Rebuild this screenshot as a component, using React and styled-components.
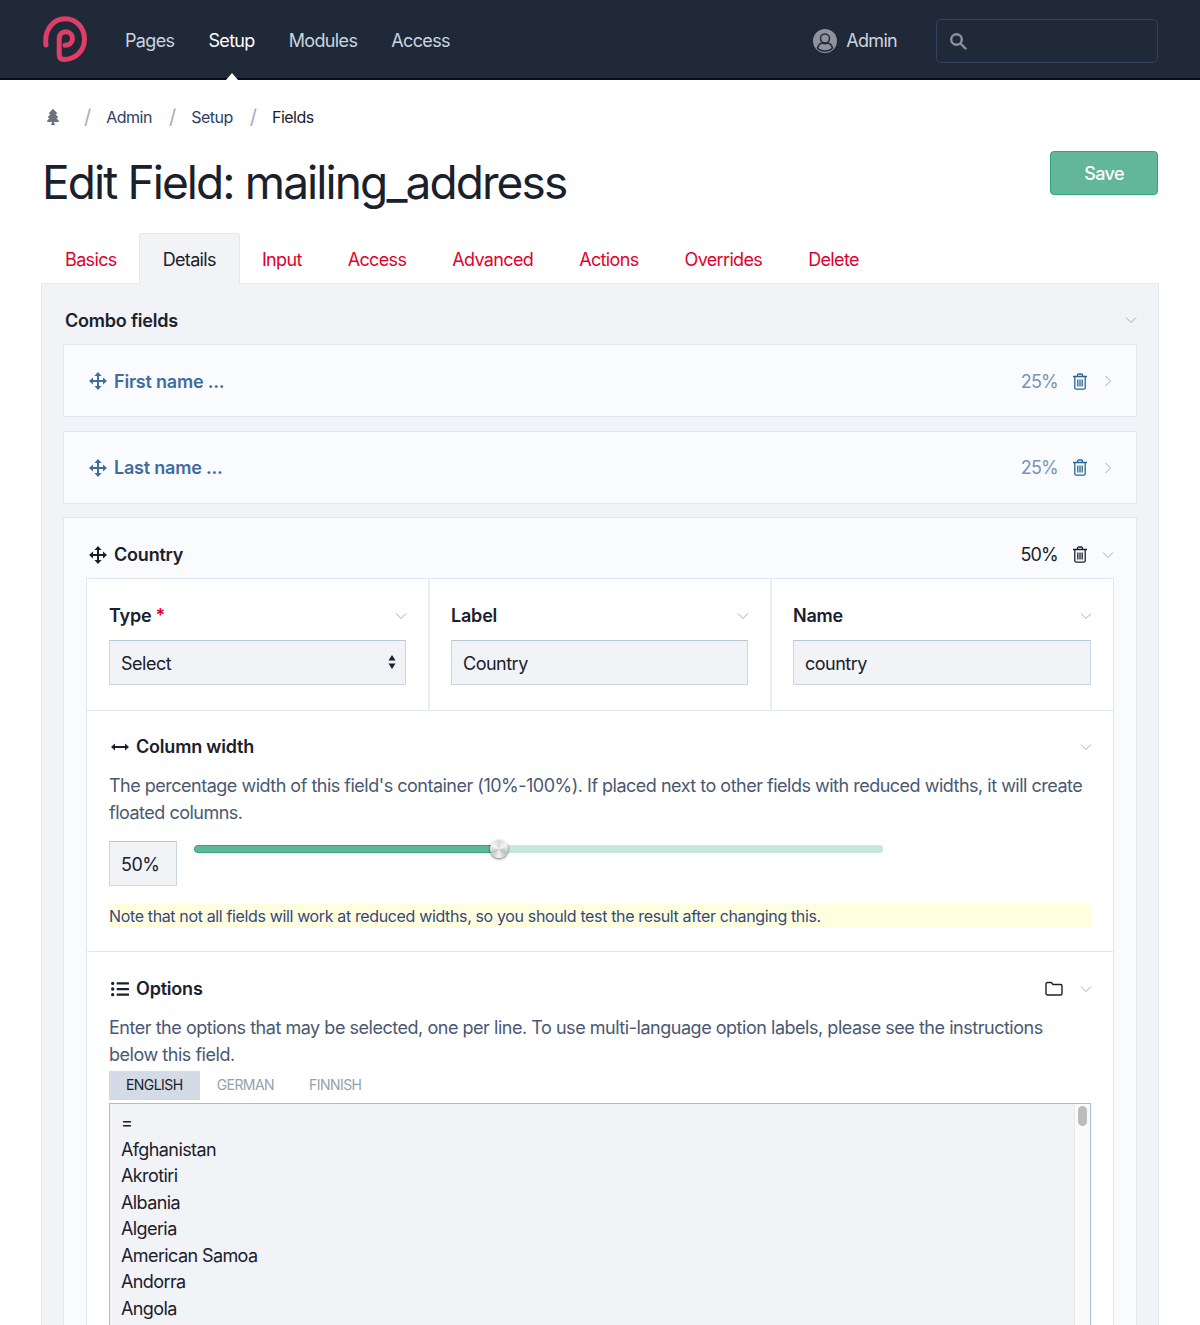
import React from "react";
import styled, { createGlobalStyle } from "styled-components";
import { FaTree, FaListUl } from "react-icons/fa";

const GlobalStyle = createGlobalStyle`
  html, body {
    margin: 0;
    padding: 0;
    height: 1325px;
    overflow: hidden;
    background: #fff;
    font-family: Inter, "Noto Sans", sans-serif;
    font-size: 18px;
    letter-spacing: -0.5px;
    color: #1a202c;
  }
  * { box-sizing: border-box; }
`;

// Top bar
const TopBar = styled.header`
  height: 80px;
  background: #1f2937;
  border-bottom: 2px solid #0b0d1e;
  display: flex;
  align-items: center;
  padding: 3px 42px 0 43px;
`;

const Logo = styled.svg`
  width: 44px;
  height: 46px;
  margin: -3px 38px 0 0;
  flex: none;
`;

const Nav = styled.nav`
  display: flex;
  gap: 34px;
  flex: 1;
`;

const NavLink = styled.a`
  position: relative;
  font-size: 18px;
  line-height: 24px;
  letter-spacing: -0.65px;
  color: ${(p) => (p.$active ? "#fff" : "#cbd5e0")};

  ${(p) =>
    p.$active &&
    `&::after {
      content: "";
      position: absolute;
      left: 50%;
      bottom: -27px;
      margin-left: -6px;
      border: 6px solid transparent;
      border-top: 0;
      border-bottom: 7px solid #fff;
    }`}
`;

const UserMenu = styled.div`
  display: flex;
  align-items: center;
  gap: 9px;
  color: #cbd5e0;
  letter-spacing: -0.7px;
  margin-right: 39px;
`;

const SearchBox = styled.div`
  width: 222px;
  height: 44px;
  border: 1px solid #33415e;
  border-radius: 5px;
  display: flex;
  align-items: center;
  padding-left: 12px;
`;

// Head of the page
const Content = styled.main`
  padding: 0 41px;
`;

const Breadcrumbs = styled.div`
  display: flex;
  align-items: center;
  height: 24px;
  margin-top: 25px;
  padding-left: 4px;
  font-size: 16px;
  color: #2d3e63;
`;

const Slash = styled.span`
  color: #a0aec0;
  font-size: 20px;
  margin: 0 15.500px 0 ${(p) => (p.$first ? "23px" : "17px")};
`;

const Crumb = styled.span`
  color: ${(p) => (p.$current ? "#1a202c" : "#2d3e63")};
`;

const TitleRow = styled.div`
  display: flex;
  justify-content: space-between;
  align-items: flex-start;
  margin-top: 22px;
  height: 82px;
`;

const Title = styled.h1`
  margin: -1px 0 0;
  padding-left: 1px;
  font-size: 46px;
  line-height: 64px;
  font-weight: 400;
  letter-spacing: -1.9px;
  color: #1a202c;
`;

const SaveButton = styled.button`
  width: 108px;
  height: 44px;
  margin-right: 1px;
  background: #62b69a;
  border: 1px solid #2fa67f;
  border-radius: 4px;
  color: #fff;
  font: 500 18px Inter, sans-serif;
  letter-spacing: -0.6px;
`;

// Tabs
const Tabs = styled.div`
  display: flex;
  height: 51px;
  padding-left: 1px;
  margin-bottom: -1px;
  position: relative;
  z-index: 1;
`;

const Tab = styled.a`
  display: flex;
  align-items: center;
  padding: 0 ${(p) => (p.$active ? "23px" : "22px")};
  margin: 0 ${(p) => (p.$active ? "-1px" : "0")};
  font-size: 18px;
  letter-spacing: -0.65px;
  color: ${(p) => (p.$active ? "#1a202c" : "#e3002b")};
  background: ${(p) => (p.$active ? "#f1f3f7" : "transparent")};
  border: 1px solid ${(p) => (p.$active ? "#e2e8f0" : "transparent")};
  border-bottom: 0;
  border-radius: 3px 3px 0 0;
`;

const Panel = styled.section`
  background: #f1f3f7;
  border: 1px solid #e2e8f0;
  padding: 0 21px;
  height: 1100px;
`;

const HeadRow = styled.div`
  display: flex;
  align-items: center;
  height: ${(p) => p.$height || "61px"};
  padding: ${(p) => p.$top || "12px"} ${(p) => p.$right || "0"} 0 ${(p) => p.$indent || "0"};
`;

const Label = styled.div`
  flex: 1;
  display: flex;
  align-items: center;
  gap: 7px;
  font-weight: 600;
  font-size: 18px;
  letter-spacing: -0.2px;
  color: ${(p) => p.$color || "#1a202c"};
`;

const Required = styled.span`
  color: #e3002b;
  margin-left: -3px;
`;

const Chevron = styled.svg`
  width: 14px;
  height: 14px;
  margin-right: -2px;
  flex: none;
  fill: none;
  stroke: #a0aec0;
  stroke-width: 1;
`;

// Combo rows
const Row = styled.div`
  background: #fafbfe;
  border: 1px solid #dfe7f1;
  margin-bottom: 13.5px;
  padding: 0 22px;
`;

const RowHead = styled.div`
  height: ${(p) => (p.$open ? "60px" : "71px")};
  display: flex;
  align-items: center;
  padding: ${(p) => (p.$open ? "13px" : "1px")} 1px 0 3px;
`;

const Percent = styled.span`
  font-size: 18px;
  letter-spacing: -0.8px;
  color: ${(p) => p.$color};
  margin-right: 14px;
`;

const Trash = styled.svg`
  width: 16px;
  height: 17px;
  margin-right: 13px;
  fill: none;
  stroke: ${(p) => p.$color};
  stroke-width: 1.3;
`;

const FieldGroup = styled.div`
  background: #fff;
  border: 1px solid #dfe7f1;
`;

const Columns = styled.div`
  display: grid;
  grid-template-columns: 341px 342px 1fr;
  border-bottom: 1px solid #dfe7f1;
`;

const Cell = styled.div`
  padding: 0 22px 25px;
  & + & {
    border-left: 2px solid #e9eef5;
    padding-left: 21px;
  }
`;

const Input = styled.div`
  height: 45px;
  background: #f1f3f7;
  border: 1px solid #c9d6e4;
  border-top-color: #b8c6d8;
  display: flex;
  align-items: center;
  justify-content: space-between;
  padding: 1px 11px 0;
  font-size: 18px;
  width: ${(p) => p.$width || "auto"};
  flex: none;
  color: #1a202c;
`;

const SelectArrows = styled.svg`
  width: 8px;
  height: 14px;
  fill: #1a202c;
  margin: -3px -2px 0 0;
`;

const Section = styled.div`
  padding: 0 22px 24px;
  border-bottom: 1px solid #dfe7f1;
  height: ${(p) => p.$height || "auto"};
`;

const Help = styled.p`
  margin: 0;
  font-size: 18px;
  line-height: 27px;
  color: #4a5873;
  letter-spacing: ${(p) => p.$spacing || "-0.5px"};
`;

const SliderRow = styled.div`
  display: flex;
  align-items: flex-start;
  margin-top: 15px;
  gap: 17px;
`;

const Track = styled.div`
  position: relative;
  width: 689px;
  height: 8px;
  margin-top: 4px;
  border-radius: 4px;
  background: #c6e8dc;
`;

const TrackFill = styled.div`
  height: 8px;
  border-radius: 4px;
  background: #62b69a;
  border: 1px solid #2fa67f;
`;

const Thumb = styled.div`
  position: absolute;
  top: -5px;
  width: 18px;
  height: 18px;
  border-radius: 50%;
  background: conic-gradient(#d8d8d8, #f6f6f6, #bdbdbd, #f2f2f2, #c4c4c4, #f6f6f6, #d8d8d8);
  box-shadow: 0 1px 3px rgba(0, 0, 0, 0.6);
`;

const Note = styled.div`
  margin-top: 18px;
  height: 24px;
  background: #ffffe0;
  font-size: 16px;
  line-height: 24px;
  letter-spacing: -0.36px;
  color: #36497a;
`;

const Folder = styled.svg`
  width: 18px;
  height: 16px;
  margin-right: 16px;
  fill: none;
  stroke: #1a202c;
  stroke-width: 1.4;
`;

const LangTabs = styled.div`
  display: flex;
  height: 29px;
  margin-top: 3px;
`;

const LangTab = styled.div`
  padding: 0 ${(p) => (p.$active ? "17px" : "18px")} 0 17px;
  font-size: 14px;
  line-height: 28px;
  letter-spacing: -0.55px;
  background: ${(p) => (p.$active ? "#d3dbe6" : "transparent")};
  color: ${(p) => (p.$active ? "#1a202c" : "#969fad")};
`;

const TextArea = styled.div`
  position: relative;
  margin-top: 3px;
  background: #f1f3f7;
  border: 1px solid #aebcd3;
  padding: 6px 11px;
  height: 400px;
  font-size: 18px;
  line-height: 26.5px;
  letter-spacing: -0.6px;
  color: #1a202c;
`;

const ScrollTrack = styled.div`
  position: absolute;
  top: 0;
  right: 0;
  bottom: 0;
  width: 16px;
  background: #fafafa;
  border-left: 1px solid #e8e8e8;
`;

const ScrollThumb = styled.div`
  width: 9px;
  height: 20px;
  margin: 2px 0 0 3px;
  border-radius: 5px;
  background: #bcbcbc;
`;

const ChevronDown = () => (
  <Chevron viewBox="0 0 14 14"><path d="M2 4.500l5 5 5-5" /></Chevron>
);

const ChevronRight = () => (
  <Chevron viewBox="0 0 14 14"><path d="M4.500 2l5 5-5 5" /></Chevron>
);

const TrashIcon = ({ color }) => (
  <Trash $color={color} viewBox="0 0 16 17">
    <path d="M1 3.500h14M5.500 3.500V2.200c0-.7.5-1.200 1.200-1.200h2.600c.7 0 1.200.5 1.200 1.200v1.300M2.800 3.500v11.200c0 .9.6 1.500 1.500 1.500h7.400c.9 0 1.500-.6 1.500-1.500V3.500M5.800 6.500v7M8 6.500v7M10.200 6.500v7" />
  </Trash>
);

const MoveIcon = () => (
  <svg width="18" height="18" viewBox="0 0 18 18" fill="currentColor" style={{ flex: "none" }}>
    <path d="M8 3h2v5h5v2h-5v5H8v-5H3V8h5z" />
    <path d="M9 0l3.600 4H5.400zM9 18l-3.600-4h7.200zM0 9l4-3.600v7.200zM18 9l-4 3.600V5.400z" />
  </svg>
);

const ArrowsH = () => (
  <svg width="18" height="10" viewBox="0 0 18 10" fill="#1a202c" style={{ flex: "none" }}>
    <path d="M0 5l4-3.500V4h10V1.500L18 5l-4 3.500V6H4v2.500z" />
  </svg>
);

const countries = ["=", "Afghanistan", "Akrotiri", "Albania", "Algeria", "American Samoa", "Andorra", "Angola"];

const App = () => {
  return (
    <>
      <GlobalStyle />
      <TopBar>
        <Logo viewBox="0 0 44 46" fill="none" stroke="#e03e69" strokeWidth="5" strokeLinecap="round">
          <path d="M3 29C1 14 10 2.800 22.300 2.800c11 0 19.200 9.300 19.200 20.200 0 12-9.200 20.500-20.500 20.500-3 0-4.800-1.800-4.800-5V22.500c0-4 2.800-6.800 6.500-6.800 3.800 0 6.800 3 6.800 6.800 0 3.800-3 6.800-7.500 6.800" />
        </Logo>
        <Nav>
          <NavLink>Pages</NavLink>
          <NavLink $active>Setup</NavLink>
          <NavLink>Modules</NavLink>
          <NavLink>Access</NavLink>
        </Nav>
        <UserMenu>
          <svg width="24" height="24" viewBox="0 0 24 24">
            <circle cx="12" cy="12" r="12" fill="#8d929c" />
            <circle cx="12" cy="9.500" r="4.500" fill="#8d929c" stroke="#1f2937" strokeWidth="1.500" />
            <path d="M4.500 19c1-3.500 3.500-4.800 5-4.800 1.500.8 3.500.8 5 0 1.500 0 4 1.300 5 4.800-3.500 4-11.500 4-15 0z" fill="#8d929c" stroke="#1f2937" strokeWidth="1.500" />
          </svg>
          Admin
        </UserMenu>
        <SearchBox>
          <svg width="18" height="18" viewBox="0 0 18 18" fill="none" stroke="#8d929c" strokeWidth="2.400">
            <circle cx="7.500" cy="7.500" r="5.300" />
            <path d="M11.500 11.500l5 5" strokeLinecap="round" />
          </svg>
        </SearchBox>
      </TopBar>
      <Content>
        <Breadcrumbs>
          <FaTree size={16} color="#6b7280" />
          <Slash $first>/</Slash>
          <Crumb>Admin</Crumb>
          <Slash>/</Slash>
          <Crumb>Setup</Crumb>
          <Slash>/</Slash>
          <Crumb $current>Fields</Crumb>
        </Breadcrumbs>
        <TitleRow>
          <Title>Edit Field: mailing_address</Title>
          <SaveButton>Save</SaveButton>
        </TitleRow>
        <Tabs>
          <Tab>Basics</Tab>
          <Tab $active>Details</Tab>
          <Tab>Input</Tab>
          <Tab>Access</Tab>
          <Tab>Advanced</Tab>
          <Tab>Actions</Tab>
          <Tab>Overrides</Tab>
          <Tab>Delete</Tab>
        </Tabs>
        <Panel>
          <HeadRow $height="60px" $indent="2px" $right="1px">
            <Label>Combo fields</Label>
            <ChevronDown />
          </HeadRow>
          <Row>
            <RowHead>
              <Label $color="#3f6c9f"><MoveIcon />First name ...</Label>
              <Percent $color="#7a94b5">25%</Percent>
              <TrashIcon color="#2a6496" />
              <ChevronRight />
            </RowHead>
          </Row>
          <Row>
            <RowHead>
              <Label $color="#3f6c9f"><MoveIcon />Last name ...</Label>
              <Percent $color="#7a94b5">25%</Percent>
              <TrashIcon color="#2a6496" />
              <ChevronRight />
            </RowHead>
          </Row>
          <Row>
            <RowHead $open>
              <Label><MoveIcon />Country</Label>
              <Percent $color="#1a202c">50%</Percent>
              <TrashIcon color="#1a202c" />
              <ChevronDown />
            </RowHead>
            <FieldGroup>
              <Columns>
                <Cell>
                  <HeadRow><Label>Type <Required>*</Required></Label><ChevronDown /></HeadRow>
                  <Input>
                    Select
                    <SelectArrows viewBox="0 0 8 14"><path d="M4 0l3.500 5.500h-7zM4 14l3.500-5.500h-7z" /></SelectArrows>
                  </Input>
                </Cell>
                <Cell>
                  <HeadRow><Label>Label</Label><ChevronDown /></HeadRow>
                  <Input>Country</Input>
                </Cell>
                <Cell>
                  <HeadRow><Label>Name</Label><ChevronDown /></HeadRow>
                  <Input>country</Input>
                </Cell>
              </Columns>
              <Section $height="241px">
                <HeadRow $indent="2px" $top="10px">
                  <Label><ArrowsH />Column width</Label>
                  <ChevronDown />
                </HeadRow>
                <Help>The percentage width of this field's container (10%-100%). If placed next to other fields with reduced widths, it will create floated columns.</Help>
                <SliderRow>
                  <Input $width="68px">50%</Input>
                  <Track>
                    <TrackFill style={{ width: `${(304 / 689) * 100}%` }} />
                    <Thumb style={{ left: "296px" }} />
                  </Track>
                </SliderRow>
                <Note>Note that not all fields will work at reduced widths, so you should test the result after changing this.</Note>
              </Section>
              <Section>
                <HeadRow $indent="2px" $top="11px" $height="62px">
                  <Label><FaListUl size={18} />Options</Label>
                  <Folder viewBox="0 0 18 16">
                    <path d="M1 3c0-.8.6-1.500 1.500-1.500h3.800l1.700 2h7.500c.8 0 1.500.6 1.500 1.500v7.500c0 .8-.7 1.500-1.500 1.500h-13C1.600 14 1 13.300 1 12.500z" />
                  </Folder>
                  <ChevronDown />
                </HeadRow>
                <Help $spacing="-0.47px">Enter the options that may be selected, one per line. To use multi-language option labels, please see the instructions below this field.</Help>
                <LangTabs>
                  <LangTab $active>ENGLISH</LangTab>
                  <LangTab>GERMAN</LangTab>
                  <LangTab>FINNISH</LangTab>
                </LangTabs>
                <TextArea>
                  {countries.map((c) => (
                    <div key={c}>{c}</div>
                  ))}
                  <ScrollTrack><ScrollThumb /></ScrollTrack>
                </TextArea>
              </Section>
            </FieldGroup>
          </Row>
        </Panel>
      </Content>
    </>
  );
};

export default App;
